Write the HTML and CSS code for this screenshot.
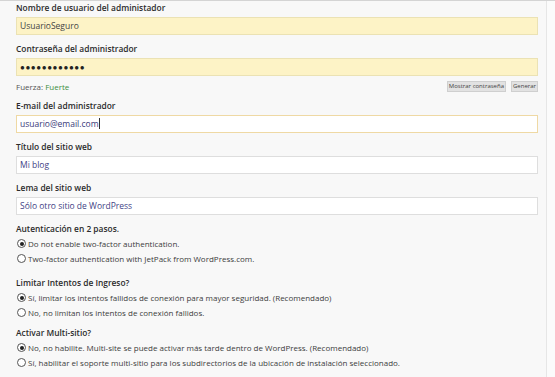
FILE: index.html
```html
<!DOCTYPE html>
<html lang="es">
<head>
<meta charset="utf-8">
<title>Instalación</title>
<link rel="stylesheet" href="styles.css">
</head>
<body>
<div class="page">
  <div class="panel">
    <div class="field">
      <div class="label">Nombre de usuario del administador</div>
      <div class="input filled">UsuarioSeguro</div>
    </div>
    <div class="field">
      <div class="label">Contraseña del administrador</div>
      <div class="input filled pass">●●●●●●●●●●●●</div>
      <div class="strength-row">
        <span class="strength">Fuerza: <span class="strong">Fuerte</span></span>
        <span class="buttons"><span class="btn">Mostrar contraseña</span><span class="btn">Generar</span></span>
      </div>
    </div>
    <div class="field">
      <div class="label">E-mail del administrador</div>
      <div class="input focus">usuario@email.com<span class="caret"></span></div>
    </div>
    <div class="field">
      <div class="label">Título del sitio web</div>
      <div class="input plain">Mi blog</div>
    </div>
    <div class="field">
      <div class="label">Lema del sitio web</div>
      <div class="input plain">Sólo otro sitio de WordPress</div>
    </div>
    <div class="group">
      <div class="label">Autenticación en 2 pasos.</div>
      <div class="radio"><span class="dot on"></span>Do not enable two-factor authentication.</div>
      <div class="radio"><span class="dot"></span>Two-factor authentication with JetPack from WordPress.com.</div>
    </div>
    <div class="group">
      <div class="label">Limitar Intentos de Ingreso?</div>
      <div class="radio"><span class="dot on"></span>Sí, limitar los intentos fallidos de conexión para mayor seguridad. (Recomendado)</div>
      <div class="radio"><span class="dot"></span>No, no limitan los intentos de conexión fallidos.</div>
    </div>
    <div class="group tight">
      <div class="label">Activar Multi-sitio?</div>
      <div class="radio"><span class="dot on"></span>No, no habilite. Multi-site se puede activar más tarde dentro de WordPress. (Recomendado)</div>
      <div class="radio"><span class="dot"></span>Sí, habilitar el soporte multi-sitio para los subdirectorios de la ubicación de instalación seleccionado.</div>
    </div>
  </div>
</div>
</body>
</html>
```

FILE: styles.css
```css
html, body {
  margin: 0;
  padding: 0;
  background: #fbfbfb;
}
body {
  font-family: "Open Sans", "Noto Sans", sans-serif;
  color: #333;
  width: 555px;
  height: 377px;
  overflow: hidden;
}
.page {
  display: flex;
  border-top: 1px solid #d4d4d4;
}
.panel {
  width: 522px;
  padding: 0 8px 0 16px;
  background: #f8f8f8;
  border-right: 1px solid #e6e6e6;
  height: 377px;
  display: flex;
  flex-direction: column;
}
.label {
  font-size: 8.4px;
  font-weight: 600;
  line-height: 12px;
  color: #2b2b2b;
  margin-bottom: 3px;
}
.field {
  margin-top: 1px;
}
.field + .field {
  margin-top: 8px;
}
.input {
  height: 16px;
  line-height: 16px;
  border: 1px solid #e2dcc0;
  padding: 0 3px;
  font-size: 8.5px;
  color: #444;
  box-sizing: content-box;
  width: 514px;
}
.input.filled {
  background: #fdf3c6;
  border-color: #ebe2b4;
}
.input.pass {
  font-size: 8px;
  letter-spacing: 0.6px;
  color: #222;
}
.input.focus {
  background: #fff;
  border-color: #efd9a4;
  color: #3a3a7a;
}
.input.plain {
  background: #fff;
  border-color: #dedede;
  color: #3f3f85;
}
.caret {
  display: inline-block;
  width: 1px;
  height: 11px;
  background: #333;
  vertical-align: -2px;
}
.strength-row {
  display: flex;
  justify-content: space-between;
  align-items: center;
  margin-top: 4px;
  height: 12px;
}
.strength {
  font-size: 8px;
  color: #555;
}
.strong {
  color: #3f8f3f;
}
.buttons {
  display: flex;
  gap: 5px;
}
.btn {
  font-size: 6px;
  line-height: 9px;
  padding: 0 1px;
  background: #e2e2e2;
  border: 1px solid #cfcfcf;
  color: #444;
}
.group {
  margin-top: 8px;
}
.group + .group {
  margin-top: 11px;
}
.group.tight {
  margin-top: 7px;
}
.group .label {
  margin-bottom: 1px;
}
.radio {
  display: flex;
  align-items: center;
  font-size: 8px;
  line-height: 15px;
  color: #3c3c3c;
  white-space: nowrap;
}
.dot {
  width: 7px;
  height: 7px;
  border: 1px solid #555;
  border-radius: 50%;
  margin-right: 2px;
  margin-left: 1px;
  position: relative;
  flex: none;
  background: #fff;
}
.dot.on::after {
  content: "";
  position: absolute;
  left: 1.5px;
  top: 1.5px;
  width: 4px;
  height: 4px;
  border-radius: 50%;
  background: #222;
}
```
